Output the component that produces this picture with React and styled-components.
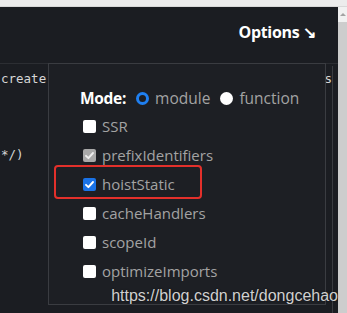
import styled, { createGlobalStyle } from "styled-components";

const GlobalStyle = createGlobalStyle`
  html, body {
    margin: 0;
    padding: 0;
    background: #1b1d22;
    overflow: hidden;
  }
`;

const options = [
  { name: "SSR", state: "off" },
  { name: "prefixIdentifiers", state: "disabled" },
  { name: "hoistStatic", state: "on" },
  { name: "cacheHandlers", state: "off" },
  { name: "scopeId", state: "off" },
  { name: "optimizeImports", state: "off" },
];

function App() {
  return (
    <Page>
      <GlobalStyle />
      <TopBar />
      <Body>
        <Main>
          <Header>
            <OptionsToggle>Options ↘</OptionsToggle>
          </Header>
          <Editor>
            <CodeLine>
              <span>create</span>
              <span>s</span>
            </CodeLine>
            <CodeLine $top={60}>
              <span>*/)</span>
            </CodeLine>
            <EditorEdge />
          </Editor>

          <Panel>
            <ModeRow>
              <ModeLabel>Mode:</ModeLabel>
              <Radio $checked />
              <RadioText>module</RadioText>
              <Radio />
              <RadioText>function</RadioText>
            </ModeRow>
            <List>
              {options.map((o) => (
                <Item key={o.name}>
                  <Box $state={o.state}>
                    {o.state !== "off" && (
                      <svg width="11" height="11" viewBox="0 0 11 11">
                        <path
                          d="M2 5.8 L4.4 8.2 L9 3"
                          fill="none"
                          stroke={o.state === "on" ? "#fff" : "#eee"}
                          strokeWidth="1.9"
                          strokeLinecap="round"
                          strokeLinejoin="round"
                        />
                      </svg>
                    )}
                  </Box>
                  <ItemText>{o.name}</ItemText>
                </Item>
              ))}
            </List>
            <Highlight />
          </Panel>

          <Watermark>https://blog.csdn.net/dongcehao</Watermark>
        </Main>
        <Scrollbar>
          <ScrollArrow />
        </Scrollbar>
      </Body>
    </Page>
  );
}

export default App;

const Page = styled.div`
  width: 347px;
  height: 313px;
  display: flex;
  flex-direction: column;
  overflow: hidden;
`;

const TopBar = styled.div`
  height: 6px;
  background: #ececec;
  border-bottom: 1px solid #d8d8d8;
  flex-shrink: 0;
`;

const Body = styled.div`
  flex: 1;
  display: flex;
  min-height: 0;
`;

const Main = styled.div`
  position: relative;
  flex: 1;
  background: #1b1d22;
  display: flex;
  flex-direction: column;
`;

const Header = styled.div`
  height: 56px;
  display: flex;
  align-items: center;
  justify-content: flex-end;
  padding: 0 22px 6px 0;
  box-sizing: border-box;
`;

const OptionsToggle = styled.div`
  font-family: "Open Sans", "Noto Sans", sans-serif;
  font-weight: 700;
  font-size: 16px;
  color: #fff;
  letter-spacing: -0.3px;
`;

const Editor = styled.div`
  position: relative;
  flex: 1;
  border-top: 1px solid #2c2e33;
`;

const CodeLine = styled.div`
  display: flex;
  justify-content: space-between;
  padding: 0 6px 0 1px;
  margin-top: ${(p) => p.$top || 7}px;
  font-family: "DejaVu Sans Mono", monospace;
  font-size: 12.5px;
  line-height: 16px;
  color: #d6d6d6;
`;

const EditorEdge = styled.div`
  position: absolute;
  top: 2px;
  bottom: 0;
  right: 5px;
  width: 1px;
  background: #3a3c41;
`;

const Panel = styled.div`
  position: absolute;
  left: 48px;
  top: 56px;
  width: 278px;
  height: 242px;
  box-sizing: border-box;
  background: #1d1f24;
  border: 1px solid #3a3c41;
  padding: 23px 0 0 31px;
  font-family: "Open Sans", "Noto Sans", sans-serif;
`;

const ModeRow = styled.div`
  display: flex;
  align-items: center;
  height: 22px;
`;

const ModeLabel = styled.span`
  color: #fff;
  font-weight: 700;
  font-size: 15.5px;
  margin-right: 10px;
  letter-spacing: -0.3px;
`;

const Radio = styled.span`
  width: 13px;
  height: 13px;
  border-radius: 50%;
  box-sizing: border-box;
  background: ${(p) => (p.$checked ? "#1b1d22" : "#fff")};
  border: ${(p) => (p.$checked ? "3px solid #1f7ff0" : "none")};
  margin-right: 6px;
`;

const RadioText = styled.span`
  color: #a3a3a3;
  font-size: 15.5px;
  margin-right: 10px;
`;

const List = styled.div`
  display: flex;
  flex-direction: column;
  gap: 7px;
  margin-top: 6px;
  padding-left: 3px;
`;

const Item = styled.div`
  display: flex;
  align-items: center;
  height: 22px;
`;

const Box = styled.span`
  width: 13px;
  height: 13px;
  border-radius: 2px;
  box-sizing: border-box;
  display: flex;
  align-items: center;
  justify-content: center;
  margin-right: 6px;
  background: ${(p) =>
    p.$state === "on" ? "#1a73e8" : p.$state === "disabled" ? "#a9a9a9" : "#fff"};
`;

const ItemText = styled.span`
  color: #a3a3a3;
  font-size: 15px;
`;

const Highlight = styled.div`
  position: absolute;
  left: 5px;
  top: 101px;
  width: 148px;
  height: 34px;
  box-sizing: border-box;
  border: 2px solid #e3302b;
  border-radius: 4px;
`;

const Watermark = styled.div`
  position: absolute;
  right: 0;
  bottom: 8px;
  font-family: "Liberation Sans", Arial, sans-serif;
  font-size: 16px;
  color: #d0d0d0;
  text-shadow: 0 0 2px rgba(0, 0, 0, 0.6);
  white-space: nowrap;
`;

const Scrollbar = styled.div`
  width: 9px;
  background: #cdcdcd;
  display: flex;
  flex-direction: column;
`;

const ScrollArrow = styled.div`
  height: 15px;
  background: #f1f1f1;
  display: flex;
  align-items: center;
  justify-content: center;

  &::before {
    content: "";
    border-left: 3px solid transparent;
    border-right: 3px solid transparent;
    border-bottom: 3px solid #a3a3a3;
  }
`;
